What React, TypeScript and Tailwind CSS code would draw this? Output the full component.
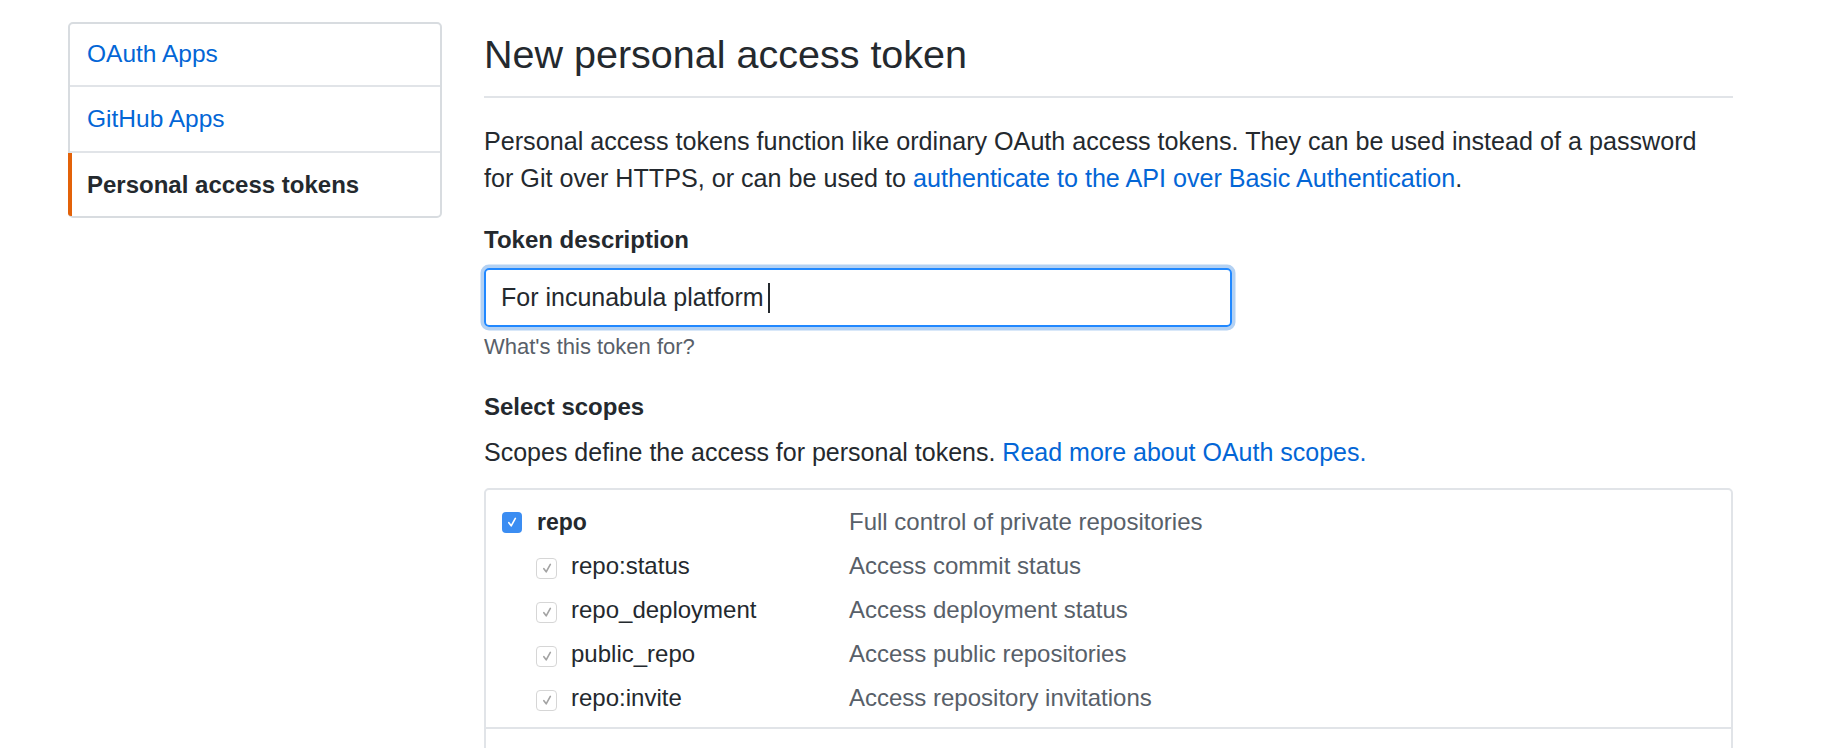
import React from 'react';

const subScopes: [string, string][] = [
  ['repo:status', 'Access commit status'],
  ['repo_deployment', 'Access deployment status'],
  ['public_repo', 'Access public repositories'],
  ['repo:invite', 'Access repository invitations'],
];

function Tick({ className }: { className: string }) {
  return (
    <svg viewBox="0 0 20 20" className={className} fill="none" stroke="currentColor" strokeWidth={1.8} strokeLinecap="round" strokeLinejoin="round" aria-hidden="true">
      <path d="M6.5 10.8l2.6 3.4 4.6-8.2" />
    </svg>
  );
}

function Sidebar() {
  return (
    <nav className="flex w-[374px] shrink-0 flex-col self-start rounded-[5px] border-2 border-[#d8dce0] bg-white">
      <a className="flex h-[63px] shrink-0 items-center border-b-2 border-[#e1e4e8] pl-[17px] text-[24.5px] text-[#0366d6]">OAuth Apps</a>
      <a className="flex h-[66px] shrink-0 items-center border-b-2 border-[#e1e4e8] pl-[17px] text-[24.5px] text-[#0366d6]">GitHub Apps</a>
      <a className="-ml-[2px] flex h-[63px] shrink-0 items-center rounded-bl-[3px] border-l-4 border-[#e36209] pl-[15px] text-[24px] font-bold text-[#24292e]">
        Personal access tokens
      </a>
    </nav>
  );
}

function ScopeRow({ name, desc, main }: { name: string; desc: string; main?: boolean }) {
  return (
    <div className="flex h-[44px] items-center">
      <div className={main ? 'flex w-[363px] items-center pl-[16px]' : 'flex w-[363px] items-center pl-[50px]'}>
        {main ? (
          <span className="flex h-[21px] w-[20px] items-center justify-center rounded-[4px] bg-[#3b8df2] text-white">
            <Tick className="h-[18px] w-[18px]" />
          </span>
        ) : (
          <span className="mt-[4px] flex h-[21px] w-[21px] items-center justify-center rounded-[4px] border border-[#d6d6d6] bg-white text-[#a3a3a3]">
            <Tick className="h-[18px] w-[18px]" />
          </span>
        )}
        <span className={main ? 'ml-[15px] text-[23px] font-bold text-[#24292e]' : 'ml-[14px] text-[24px] text-[#24292e]'}>{name}</span>
      </div>
      <span className="text-[24px] text-[#586069]">{desc}</span>
    </div>
  );
}

export default function App() {
  return (
    <div className="flex h-[748px] items-start gap-[42px] overflow-hidden bg-white pl-[68px] pt-[22px] font-['Liberation_Sans',Arial,sans-serif] text-[#24292e]">
      <Sidebar />
      <main className="block w-[1249px] shrink-0">
        <h2 className="mt-[8px] border-b-2 border-[#e1e4e8] pb-[18px] text-[39.5px] font-normal leading-[48px]">New personal access token</h2>

        <p className="mt-[25px] text-[25.15px] leading-[36.75px]">
          Personal access tokens function like ordinary OAuth access tokens. They can be used instead of a password
          <br />
          for Git over HTTPS, or can be used to{' '}
          <a className="text-[#0366d6]">authenticate to the API over Basic Authentication</a>.
        </p>

        <label className="mt-[25px] block text-[24px] font-bold leading-[36px]">Token description</label>
        <div className="mt-[10.5px] flex h-[59px] w-[748px] items-center rounded-[5px] border-2 border-[#2188ff] pl-[15px] shadow-[0_0_0_3.5px_rgba(3,102,214,0.3)]">
          <span className="text-[25px] text-[#24292e]">For incunabula platform</span>
          <span className="ml-[4px] inline-block h-[30px] w-[2px] bg-[#24292e]" />
        </div>
        <p className="mt-[4.5px] text-[22px] leading-[30px] text-[#586069]">What's this token for?</p>

        <h3 className="mt-[27px] text-[24px] font-bold leading-[36px]">Select scopes</h3>
        <p className="mt-[9.5px] text-[25px] leading-[36.75px]">
          Scopes define the access for personal tokens. <a className="text-[#0366d6]">Read more about OAuth scopes.</a>
        </p>

        <div className="mt-[17.5px] rounded-[5px] border-2 border-[#e1e4e8]">
          <div className="pb-[7px] pt-[10px]">
            <ScopeRow main name="repo" desc="Full control of private repositories" />
            {subScopes.map(([n, d]) => (
              <ScopeRow key={n} name={n} desc={d} />
            ))}
          </div>
          <div className="h-[100px] border-t-2 border-[#e1e4e8]" />
        </div>
      </main>
    </div>
  );
}
